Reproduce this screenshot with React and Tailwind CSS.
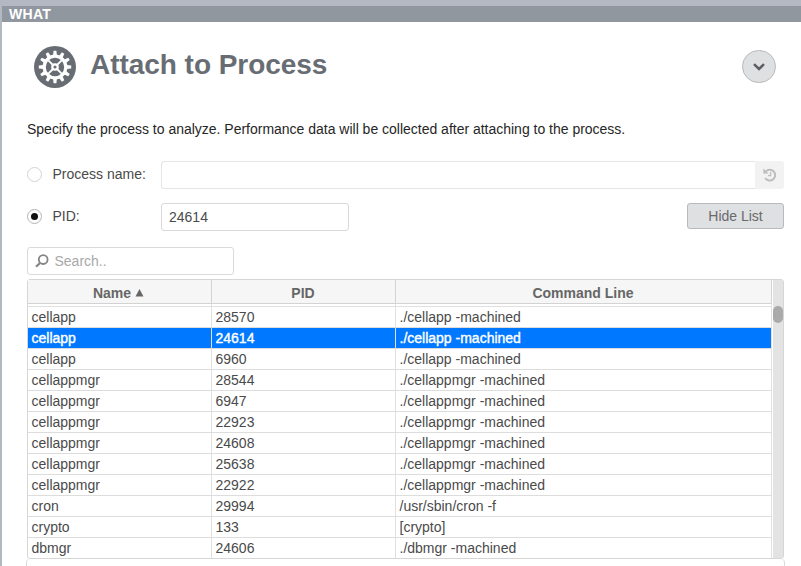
import React from "react";

const rows = [
  ["cellapp", "28570", "./cellapp -machined"],
  ["cellapp", "24614", "./cellapp -machined"],
  ["cellapp", "6960", "./cellapp -machined"],
  ["cellappmgr", "28544", "./cellappmgr -machined"],
  ["cellappmgr", "6947", "./cellappmgr -machined"],
  ["cellappmgr", "22923", "./cellappmgr -machined"],
  ["cellappmgr", "24608", "./cellappmgr -machined"],
  ["cellappmgr", "25638", "./cellappmgr -machined"],
  ["cellappmgr", "22922", "./cellappmgr -machined"],
  ["cron", "29994", "/usr/sbin/cron -f"],
  ["crypto", "133", "[crypto]"],
  ["dbmgr", "24606", "./dbmgr -machined"],
];

const spokes = [45, 135, 225, 315];
const teeth = [0, 30, 60, 90, 120, 150, 180, 210, 240, 270, 300, 330];

function GearIcon() {
  return (
    <svg className="h-[42px] w-[42px] shrink-0" viewBox="-21 -21 42 42">
      <circle r="21" fill="#686d74" />
      {teeth.map((a) => (
        <path key={a} d="M-1.9 -11.5 L-1.4 -16.2 H1.4 L1.9 -11.5 Z" fill="#fff" transform={`rotate(${a})`} />
      ))}
      <circle r="10.8" fill="none" stroke="#fff" strokeWidth="3.2" />
      {spokes.map((a) => (
        <path key={a} d="M-1 -2.5 L-0.8 -9.8 H0.8 L1 -2.5 Z" fill="#fff" transform={`rotate(${a})`} />
      ))}
      <circle r="2.7" fill="none" stroke="#fff" strokeWidth="2.2" />
    </svg>
  );
}

function Row({ row, selected }) {
  const tone = selected
    ? "bg-[#0078ff] text-white [-webkit-text-stroke:0.4px_white]"
    : "text-[#4a4a4a]";
  return (
    <div className={`flex h-[21px] w-[744px] border-b border-[#dddddd] leading-[21px] ${tone}`}>
      <div className="w-[184px] border-r border-[#e0e0e0] pl-[3.5px]">{row[0]}</div>
      <div className="w-[184px] border-r border-[#e0e0e0] pl-[3.5px]">{row[1]}</div>
      <div className="w-[376px] border-r border-[#e0e0e0] pl-[3.5px]">{row[2]}</div>
    </div>
  );
}

export default function App() {
  return (
    <div className="h-[566px] w-[801px] overflow-hidden bg-[#b3b8c2] pl-0.5 pt-1.5 font-['Liberation_Sans',Arial,sans-serif] text-[14px] text-[#4a4a4a]">
      <div className="h-4 bg-[#91979f] pl-[7px] text-[14px] font-bold leading-4 tracking-[0.3px] text-white">WHAT</div>
      <div className="h-[544px] bg-white pl-[25px] pr-[17px]">
        <div className="flex h-[94px] items-start pl-[7px] pt-6">
          <GearIcon />
          <h1 className="ml-[14px] mt-[3px] text-[28px] font-bold leading-8 tracking-[-0.04px] text-[#686d74]">Attach to Process</h1>
          <div className="ml-auto mr-2 mt-1 flex h-[33px] w-[34px] items-center justify-center rounded-full border border-[#b8b9bb] bg-[#dfe0e2]">
            <svg className="h-2 w-3" viewBox="0 0 12 8" fill="none" stroke="#5c5f61" strokeWidth="2.5">
              <path d="M1 1.2 L6 6 L11 1.2" />
            </svg>
          </div>
        </div>
        <p className="h-[45px] whitespace-nowrap pt-[3px] leading-5 tracking-[-0.01px] text-[#262626]">
          Specify the process to analyze. Performance data will be collected after attaching to the process.
        </p>
        <div className="flex h-7 w-[757px] items-center">
          <span className="mb-px h-[15px] w-[15px] rounded-full border border-[#d3d3d3] bg-white" />
          <span className="mb-0.5 ml-[10.5px] w-[108.5px] leading-5">Process name:</span>
          <div className="h-7 flex-1 rounded-l-[3px] border border-r-0 border-[#e6e6e6]" />
          <div className="flex h-7 w-[29px] items-center justify-center rounded-r-[3px] bg-[#f2f2f2]">
            <svg className="h-[14px] w-[14px]" viewBox="0 0 14 14" fill="none" stroke="#bdbdbd" strokeWidth="2">
              <path d="M2.8 3.4 A5.4 5.4 0 1 1 2.2 10" />
              <path d="M0.3 0.6 V5.6 H5.6 Z" fill="#bdbdbd" stroke="none" />
              <path d="M7.6 4 V7.6 H5" strokeWidth="1.3" />
            </svg>
          </div>
        </div>
        <div className="mt-[14px] flex h-7 w-[757px] items-center">
          <span className="mb-px flex h-[15px] w-[15px] items-center justify-center rounded-full border border-[#b5b5b5] bg-white">
            <span className="h-[7px] w-[7px] rounded-full bg-[#111111]" />
          </span>
          <span className="mb-0.5 ml-[10.5px] w-[108.5px] leading-5">PID:</span>
          <div className="h-7 w-[188px] rounded-[3px] border border-[#d9d9d9] pl-[7px] leading-[27px]">24614</div>
          <button className="mb-0.5 ml-auto h-[26px] w-[97px] rounded-[3px] border border-[#b8bbbd] bg-[#dfe0e2] text-[14px] leading-6 text-[#686a6c]">Hide List</button>
        </div>
        <div className="mt-4 flex h-7 w-[207px] items-center rounded-[3px] border border-[#dadada] pl-[7px] text-[#a8a8a8]">
          <svg className="h-[14px] w-[14px]" viewBox="0 0 14 14" fill="none" stroke="#858585" strokeWidth="1.8">
            <circle cx="8.2" cy="5.6" r="4.4" />
            <path d="M5 9 L1 12.8" strokeWidth="2.2" />
          </svg>
          <span className="ml-[5.5px]">Search..</span>
        </div>
        <div className="mt-1 flex h-[280px] w-[757px] rounded-[3px] border border-[#d6d6d6]">
          <div className="w-[745px]">
            <div className="flex h-6 w-[744px] border-b border-[#d3d3d3] bg-[#f6f6f6] text-center font-bold leading-[26px] text-[#666666]">
              <div className="flex w-[184px] justify-center border-r border-[#d3d3d3] pr-0.5">
                <span>Name</span>
                <svg className="ml-1 mt-[9px] h-2 w-[9px]" viewBox="0 0 9 8"><path d="M4.5 0 L8.5 7.5 H0.5 Z" fill="#666666" /></svg>
              </div>
              <div className="w-[184px] border-r border-[#d3d3d3] pr-px">PID</div>
              <div className="w-[376px] border-r border-[#d3d3d3] pr-px">Command Line</div>
            </div>
            <div className="flex h-[3px] w-[744px] border-b border-[#e0e0e0]">
              <div className="w-[184px] border-r border-[#e0e0e0]" />
              <div className="w-[184px] border-r border-[#e0e0e0]" />
              <div className="w-[376px] border-r border-[#e0e0e0]" />
            </div>
            <div className="h-[251px] overflow-hidden">
              {rows.map((row, i) => (
                <Row key={i} row={row} selected={i === 1} />
              ))}
            </div>
          </div>
          <div className="w-[10px] bg-[#e3e3e3] pt-[26px]">
            <div className="h-[17px] rounded-full bg-[#aaaaaa]" />
          </div>
        </div>
        <div className="-ml-px h-7 w-[759px] rounded-t-[4px] border border-t-0 border-[#dadada]" />
      </div>
    </div>
  );
}
